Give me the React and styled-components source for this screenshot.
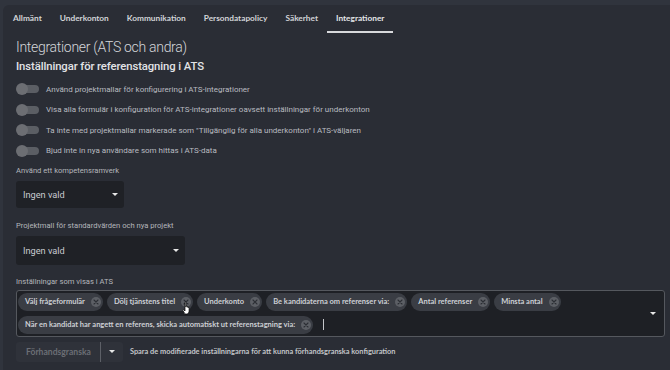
import React from "react";
import styled, { createGlobalStyle } from "styled-components";

const GlobalStyle = createGlobalStyle`
  body {
    margin: 0;
    background: #30343d;
    font-family: Roboto, "Liberation Sans", sans-serif;
    color: #c9cbd0;
  }
`;

const Page = styled.div`
  position: relative;
  padding: 5px 0 0 3px;
  height: 370px;
  box-sizing: border-box;
  overflow: hidden;
`;

const Panel = styled.div`
  background: #2a2d35;
  border-top-left-radius: 6px;
  height: 100%;
`;

const Tabs = styled.nav`
  display: flex;
  height: 28px;
  padding-left: 1px;
`;

const Tab = styled.div`
  display: flex;
  align-items: center;
  padding: 0 9px;
  font-family: Lato, sans-serif;
  font-size: 8.3px;
  font-weight: 700;
  color: ${(p) => (p.$active ? "#e4e5e8" : "#d2d4d8")};
  border-bottom: 2px solid ${(p) => (p.$active ? "#d8d9dc" : "transparent")};
  box-sizing: border-box;
`;

const Content = styled.div`
  padding: 4px 5px 0 13px;
`;

const Title = styled.h1`
  margin: 0;
  font-family: Roboto, sans-serif;
  font-weight: 300;
  font-size: 14px;
  letter-spacing: -0.3px;
  line-height: 20px;
  color: #d4d6da;
`;

const Subtitle = styled.h2`
  margin: 0;
  font-family: Roboto, sans-serif;
  font-weight: 500;
  font-size: 11.3px;
  letter-spacing: -0.1px;
  line-height: 19px;
  color: #e2e3e6;
`;

const ToggleList = styled.div`
  margin-top: 7px;
  display: flex;
  flex-direction: column;
  gap: 8.5px;
`;

const ToggleRow = styled.label`
  display: flex;
  align-items: center;
  gap: 7px;
  height: 12px;
  font-size: 8px;
  color: #b9bbc0;
`;

const Track = styled.span`
  position: relative;
  width: 21px;
  height: 8px;
  border-radius: 4px;
  background: #5b5e64;
  margin-left: 2px;
`;

const Thumb = styled.span`
  position: absolute;
  left: -2px;
  top: -2px;
  width: 12px;
  height: 12px;
  border-radius: 50%;
  background: #6c6e73;
`;

const Field = styled.div`
  margin-top: ${(p) => p.$top || 10}px;
`;

const Label = styled.div`
  font-size: 7.6px;
  line-height: 10px;
  color: #b4b6bb;
  margin-bottom: ${(p) => p.$gap || 5}px;
`;

const Select = styled.div`
  width: ${(p) => p.$width}px;
  height: ${(p) => p.$height || 28}px;
  box-sizing: border-box;
  background: #1f2126;
  border-radius: 3px;
  display: flex;
  align-items: center;
  justify-content: space-between;
  padding: 0 6px 0 7px;
  font-size: 9.2px;
  color: #c9cbd0;
`;

const Caret = styled.span`
  width: 0;
  height: 0;
  border-left: 3px solid transparent;
  border-right: 3px solid transparent;
  border-top: 3px solid #e8e8e8;
`;

const Multi = styled.div`
  height: 47px;
  box-sizing: border-box;
  border: 1px solid #55585e;
  border-radius: 3px;
  background: #1e2025;
  display: flex;
  align-items: center;
  padding: 1px 8px 1px 1px;
`;

const Chips = styled.div`
  flex: 1;
  display: flex;
  flex-wrap: wrap;
  align-items: center;
  row-gap: 5px;
  column-gap: 4px;
`;

const Chip = styled.span`
  display: inline-flex;
  align-items: center;
  gap: 6px;
  height: 18px;
  padding: 0 2px 0 7px;
  border-radius: 9px;
  background: #3a3d44;
  font-family: Lato, sans-serif;
  font-weight: 700;
  font-size: 7.5px;
  color: #cdd0d4;
`;

const Remove = styled.span`
  width: 10px;
  height: 10px;
  border-radius: 50%;
  background: #5c5f65;
  display: flex;
  align-items: center;
  justify-content: center;
`;

const CursorBar = styled.span`
  width: 1px;
  height: 11px;
  background: #c4c6ca;
  margin-left: 6px;
`;

const Footer = styled.div`
  margin-top: 5px;
  display: flex;
  align-items: center;
  gap: 7px;
`;

const SplitButton = styled.div`
  display: flex;
  height: 20px;
  border-radius: 3px;
  background: #2f323a;
  overflow: hidden;
`;

const ButtonMain = styled.span`
  display: flex;
  align-items: center;
  padding: 0 9px 0 10px;
  font-family: Lato, sans-serif;
  font-size: 8.6px;
  font-weight: 700;
  color: #6b6e75;
  border-right: 1px solid #5d6067;
`;

const ButtonArrow = styled.span`
  width: 22px;
  display: flex;
  align-items: center;
  justify-content: center;
`;

const Hint = styled.span`
  font-family: Lato, sans-serif;
  font-size: 7.4px;
  font-weight: 700;
  color: #c3c5c9;
`;

const Pointer = styled.svg`
  position: absolute;
  left: 182px;
  top: 301px;
`;

const tabs = [
  "Allmänt",
  "Underkonton",
  "Kommunikation",
  "Persondatapolicy",
  "Säkerhet",
  "Integrationer",
];

const toggles = [
  "Använd projektmallar för konfigurering i ATS-integrationer",
  "Visa alla formulär i konfiguration för ATS-integrationer oavsett inställningar för underkonton",
  "Ta inte med projektmallar markerade som \"Tillgänglig för alla underkonton\" i ATS-väljaren",
  "Bjud inte in nya användare som hittas i ATS-data",
];

const chips = [
  "Välj frågeformulär",
  "Dölj tjänstens titel",
  "Underkonto",
  "Be kandidaterna om referenser via:",
  "Antal referenser",
  "Minsta antal",
  "När en kandidat har angett en referens, skicka automatiskt ut referenstagning via:",
];

const CloseIcon = () => (
  <svg width="6" height="6" viewBox="0 0 6 6">
    <path d="M1 1L5 5M5 1L1 5" stroke="#2c2f35" strokeWidth="1.1" strokeLinecap="round" />
  </svg>
);

const App = () => (
  <>
    <GlobalStyle />
    <Page>
      <Panel>
        <Tabs>
          {tabs.map((t) => (
            <Tab key={t} $active={t === "Integrationer"}>
              {t}
            </Tab>
          ))}
        </Tabs>
        <Content>
          <Title>Integrationer (ATS och andra)</Title>
          <Subtitle>Inställningar för referenstagning i ATS</Subtitle>
          <ToggleList>
            {toggles.map((t) => (
              <ToggleRow key={t}>
                <Track>
                  <Thumb />
                </Track>
                {t}
              </ToggleRow>
            ))}
          </ToggleList>
          <Field $top={9}>
            <Label>Använd ett kompetensramverk</Label>
            <Select $width={108} $height={27}>
              Ingen vald
              <Caret />
            </Select>
          </Field>
          <Field $top={13}>
            <Label>Projektmall för standardvärden och nya projekt</Label>
            <Select $width={169} $height={29}>
              Ingen vald
              <Caret />
            </Select>
          </Field>
          <Field $top={12}>
            <Label $gap={3}>Inställningar som visas i ATS</Label>
            <Multi>
              <Chips>
                {chips.map((c) => (
                  <Chip key={c}>
                    {c}
                    <Remove>
                      <CloseIcon />
                    </Remove>
                  </Chip>
                ))}
                <CursorBar />
              </Chips>
              <Caret />
            </Multi>
          </Field>
          <Footer>
            <SplitButton>
              <ButtonMain>Förhandsgranska</ButtonMain>
              <ButtonArrow>
                <Caret />
              </ButtonArrow>
            </SplitButton>
            <Hint>Spara de modifierade inställningarna för att kunna förhandsgranska konfiguration</Hint>
          </Footer>
        </Content>
      </Panel>
      <Pointer width="10" height="14" viewBox="0 0 10 14">
        <path
          d="M3 1.5c0-.6.9-.6.9 0V6l.2-1c.1-.6 1-.6 1 0v1.2c.1-.6 1-.6 1 0v.6c.1-.5 1-.5 1 0V10c0 1.6-1 3-2.6 3H4.3C3.3 13 2.6 12.3 2 11.4L.8 9.2c-.3-.5.4-1 .8-.5L3 10z"
          fill="#fff"
          stroke="#000"
          strokeWidth="0.7"
        />
      </Pointer>
    </Page>
  </>
);

export default App;
